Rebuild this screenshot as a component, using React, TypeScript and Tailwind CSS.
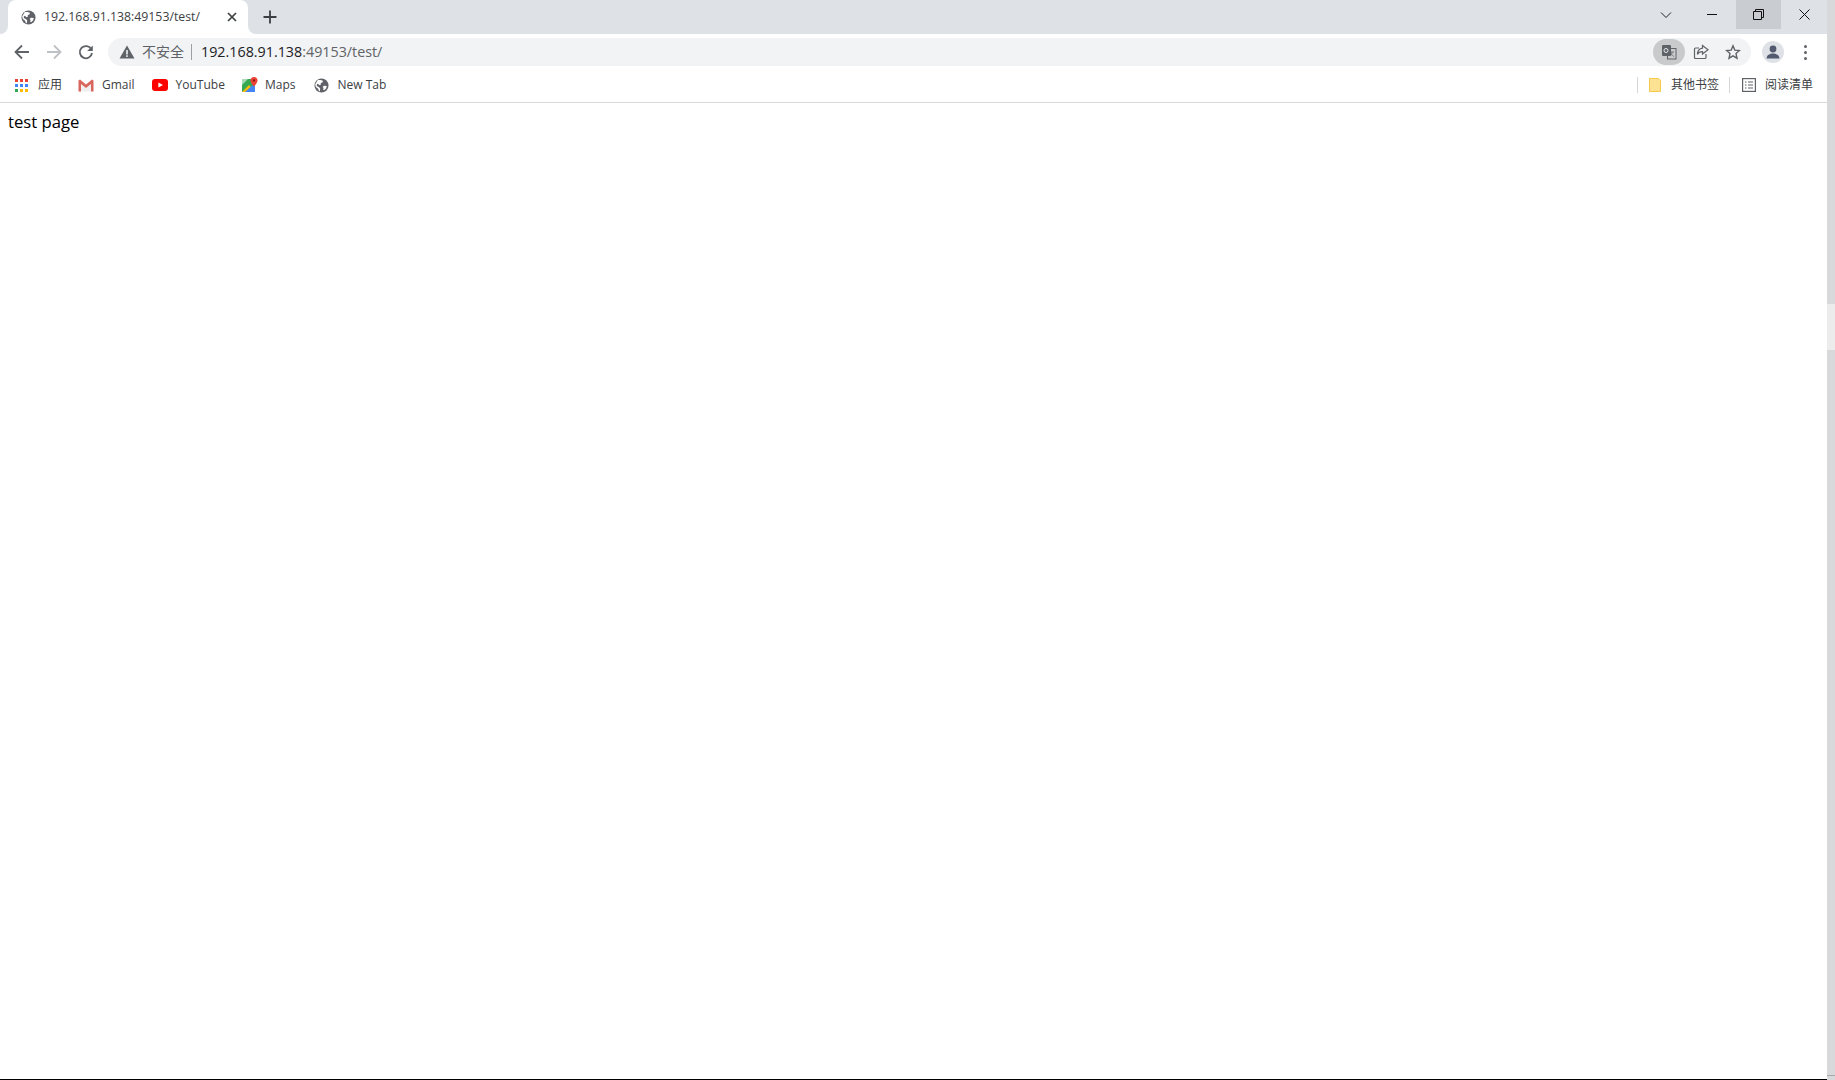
const uiFont = "font-['Open_Sans','Noto_Sans_CJK_SC',sans-serif]";

function Globe({ className }: { className: string }) {
    return (
        <svg className={className} viewBox="0 0 16 16">
            <circle cx="8" cy="8" r="7.5" fill="#5f6368" />
            <path d="M4 2.2 L7 2 L9.5 3 L9 4.8 L7.2 5.2 L7.4 6.8 L5.8 7.6 L4.2 6.2 L3 6.6 L3 8.4 L5.4 9.8 L6.6 11.2 L6.2 14.4 L5 13.4 L4.4 11.4 L2 9.6 L1.2 7 Z" fill="#fff" />
            <path d="M10.6 8.2 L13.6 8.6 L13 11 L10.8 13 L9.8 12.4 L10.2 10.6 L9.2 9.6 Z" fill="#fff" />
        </svg>
    );
}

function TabStrip() {
    return (
        <div className="flex h-[34px] items-end bg-[#dee1e6] pl-2">
            <div className="relative flex h-[34px] w-[240px] items-center rounded-t-lg bg-white pl-[13px]">
                <div className="absolute bottom-0 -left-2 h-2 w-2 bg-white">
                    <div className="h-2 w-2 rounded-br-lg bg-[#dee1e6]"></div>
                </div>
                <div className="absolute -right-2 bottom-0 h-2 w-2 bg-white">
                    <div className="h-2 w-2 rounded-bl-lg bg-[#dee1e6]"></div>
                </div>
                <Globe className="h-[15px] w-[15px]" />
                <span className="ml-2 w-[181px] text-[12.3px] whitespace-nowrap text-[#3c4043]">192.168.91.138:49153/test/</span>
                <svg className="h-[14px] w-[14px]" viewBox="0 0 14 14" fill="none" stroke="#3c4043" strokeWidth="1.7">
                    <path d="M3 3 L11 11 M11 3 L3 11" />
                </svg>
            </div>
            <svg className="mb-[9px] ml-[14px] h-4 w-4" viewBox="0 0 16 16" fill="none" stroke="#3c4043" strokeWidth="1.8">
                <path d="M8 1.5 V14.5 M1.5 8 H14.5" />
            </svg>
            <div className="flex-1"></div>
            <div className="flex h-[29px] items-center self-start">
                <div className="flex h-full w-[46px] items-center justify-center">
                    <svg className="h-3 w-3" viewBox="0 0 12 12" fill="none" stroke="#202124" strokeWidth="1">
                        <path d="M1 3.5 L6 8.5 L11 3.5" />
                    </svg>
                </div>
                <div className="w-[2px]"></div>
                <div className="flex h-full w-[45px] items-center justify-center pr-1">
                    <div className="h-px w-[10px] bg-[#111]"></div>
                </div>
                <div className="flex h-full w-[45px] items-center justify-center bg-[#c9ccd0]">
                    <svg className="h-[11px] w-[11px]" viewBox="0 0 11 11" fill="none" stroke="#111" strokeWidth="1">
                        <path d="M0.5 2.5 H8.5 V10.5 H0.5 Z M2.5 2.5 V0.5 H10.5 V8.5 H8.5" />
                    </svg>
                </div>
                <div className="flex h-full w-[46px] items-center justify-center">
                    <svg className="h-[11px] w-[11px]" viewBox="0 0 11 11" fill="none" stroke="#111" strokeWidth="1">
                        <path d="M0.5 0.5 L10.5 10.5 M10.5 0.5 L0.5 10.5" />
                    </svg>
                </div>
            </div>
        </div>
    );
}

function Toolbar() {
    return (
        <div className="flex h-[34px] items-center bg-white pt-[2px] pl-[14px]">
            <svg className="h-4 w-4" viewBox="0 0 16 16" fill="none" stroke="#5f6368" strokeWidth="1.8">
                <path d="M15 8 H2 M8 1.5 L1.5 8 L8 14.5" />
            </svg>
            <svg className="ml-4 h-4 w-4" viewBox="0 0 16 16" fill="none" stroke="#bdc1c6" strokeWidth="1.8">
                <path d="M1 8 H14 M8 1.5 L14.5 8 L8 14.5" />
            </svg>
            <svg className="ml-4 h-4 w-4" viewBox="0 0 16 16" fill="none">
                <path d="M13.3 5.2 A6.1 6.1 0 1 0 14 9" stroke="#5f6368" strokeWidth="1.8" />
                <path d="M14.8 1.4 V7 H9.2 Z" fill="#5f6368" />
            </svg>
            <div className="ml-[14px] flex h-7 w-[1643px] items-center rounded-full bg-[#f1f3f4] pl-[11px]">
                <svg className="h-4 w-4" viewBox="0 0 16 16">
                    <path d="M8 1.5 L15.5 14.5 H0.5 Z" fill="#5f6368" />
                    <rect x="7.2" y="6" width="1.6" height="4.5" fill="#f1f3f4" />
                    <rect x="7.2" y="11.3" width="1.6" height="1.6" fill="#f1f3f4" />
                </svg>
                <span className="ml-[7px] text-sm text-[#5f6368]">不安全</span>
                <div className="ml-[7px] h-[16px] w-px bg-[#9aa0a6]"></div>
                <span className="ml-[9px] text-[14.3px] whitespace-nowrap text-[#202124]">
                    192.168.91.138<span className="text-[#5f6368]">:49153/test/</span>
                </span>
                <div className="flex-1"></div>
                <div className="flex h-[26px] w-[32px] items-center justify-center rounded-full bg-[#c8cacc]">
                    <svg className="h-4 w-4" viewBox="0 0 16 16">
                        <rect x="1" y="1" width="9" height="11" rx="1" fill="#5f6368" />
                        <rect x="6.5" y="4.5" width="8.5" height="10.5" fill="none" stroke="#5f6368" strokeWidth="1" />
                        <circle cx="5" cy="6.5" r="2" fill="none" stroke="#e8eaed" strokeWidth="1" />
                        <path d="M9 8 H13 M11 8 C11 10 10 11.5 9 12 M10 9.5 C11 11 12 12 13 12.5" fill="none" stroke="#5f6368" strokeWidth="0.8" />
                    </svg>
                </div>
                <svg className="ml-2 h-4 w-4" viewBox="0 0 16 16" fill="none" stroke="#5f6368" strokeWidth="1.2">
                    <path d="M13 10 V13.5 Q13 14.5 12 14.5 H2.5 Q1.5 14.5 1.5 13.5 V5 Q1.5 4 2.5 4 H6" />
                    <path d="M9.5 1.5 L15 5.8 L9.5 10 V7.6 C7.5 7.6 5.5 8.4 4.4 10.4 C4.6 7 6.6 4.6 9.5 4.2 Z" />
                </svg>
                <svg className="ml-4 h-4 w-4" viewBox="0 0 16 16" fill="none" stroke="#5f6368" strokeWidth="1.4">
                    <path d="M8 1.8 L9.8 6.1 L14.5 6.5 L11 9.6 L12 14.2 L8 11.8 L4 14.2 L5 9.6 L1.5 6.5 L6.2 6.1 Z" />
                </svg>
                <div className="w-[10px]"></div>
            </div>
            <div className="ml-[11px] flex h-[22px] w-[22px] items-center justify-center rounded-full bg-[#dee1e6]">
                <svg className="h-4 w-4" viewBox="0 0 16 16" fill="#525a70">
                    <circle cx="8" cy="5" r="3.4" />
                    <path d="M1.6 14.5 C1.6 11 5 9.6 8 9.6 C11 9.6 14.4 11 14.4 14.5 Z" />
                </svg>
            </div>
            <div className="ml-[20px] flex flex-col gap-[3px]">
                <div className="h-[3px] w-[3px] rounded-full bg-[#5f6368]"></div>
                <div className="h-[3px] w-[3px] rounded-full bg-[#5f6368]"></div>
                <div className="h-[3px] w-[3px] rounded-full bg-[#5f6368]"></div>
            </div>
        </div>
    );
}

function AppsIcon() {
    const colors = ['#ea4335', '#ea4335', '#ea4335', '#4285f4', '#4285f4', '#4285f4', '#34a853', '#fbbc04', '#fbbc04'];
    return (
        <div className="grid h-[13px] w-[13px] grid-cols-3 gap-[2px]">
            {colors.map((c, i) => (
                <div key={i} className="h-[3px] w-[3px]" style={{ backgroundColor: c }}></div>
            ))}
        </div>
    );
}

function BookmarkBar() {
    return (
        <div className="flex h-[35px] items-center border-b border-[#d8d9da] bg-white pl-[15px] text-xs text-[#3c4043]">
            <AppsIcon />
            <span className="ml-[10px]">应用</span>
            <svg className="ml-4 h-[13px] w-4" viewBox="0 0 16 13">
                <path d="M3 5 L8 9 L13 5 V12.5 H3 Z" fill="#f0f0f0" />
                <path d="M0.5 1.5 V12.5 H3 V5 L8 9 L13 5 V12.5 H15.5 V1.5 L14 0.5 L8 5.4 L2 0.5 Z" fill="#d9665c" />
            </svg>
            <span className="ml-2">Gmail</span>
            <svg className="ml-[17px] h-3 w-4" viewBox="0 0 16 12">
                <rect width="16" height="12" rx="3" fill="#f00" />
                <path d="M6.4 3.4 L11 6 L6.4 8.6 Z" fill="#fff" />
            </svg>
            <span className="ml-2">YouTube</span>
            <svg className="ml-[17px] h-4 w-4" viewBox="0 0 16 16">
                <rect y="2" width="13" height="13" fill="#34a853" />
                <path d="M0 15 L7 8 L13 15 Z" fill="#fbbc04" />
                <path d="M3 15 L13 6 V15 Z" fill="#4285f4" />
                <path d="M0 2 H6 L0 8 Z" fill="#a8dab5" />
                <path d="M12 0 C9.8 0 8.5 1.6 8.5 3.4 C8.5 5.6 12 9.6 12 9.6 C12 9.6 15.5 5.6 15.5 3.4 C15.5 1.6 14.2 0 12 0 Z" fill="#ea4335" />
                <circle cx="12" cy="3.4" r="1.2" fill="#8c1a11" />
            </svg>
            <span className="ml-[7px]">Maps</span>
            <Globe className="ml-[19px] h-[15px] w-[15px]" />
            <span className="ml-2">New Tab</span>
            <div className="flex-1"></div>
            <div className="h-4 w-px bg-[#d5d6d8]"></div>
            <svg className="ml-[11px] h-[14px] w-3" viewBox="0 0 12 14">
                <path d="M0.5 0.5 H9.5 L11.5 2.5 V13.5 H0.5 Z" fill="#fde293" stroke="#f4c94c" />
            </svg>
            <span className="ml-[10px]">其他书签</span>
            <div className="ml-[10px] h-4 w-px bg-[#d5d6d8]"></div>
            <svg className="ml-3 h-[14px] w-[14px]" viewBox="0 0 14 14" fill="none" stroke="#5f6368" strokeWidth="1.2">
                <rect x="0.6" y="0.6" width="12.8" height="12.8" />
                <path d="M3 4 H4.5 M6 4 H11 M3 7 H4.5 M6 7 H11 M3 10 H4.5 M6 10 H11" />
            </svg>
            <span className="ml-[9px]">阅读清单</span>
            <div className="w-[14px]"></div>
        </div>
    );
}

function Scrollbar() {
    return (
        <div className="flex w-2 shrink-0 flex-col bg-[#d8d9da]">
            <div className="h-[304px]"></div>
            <div className="h-[46px] bg-[#ececec]"></div>
            <div className="flex-1"></div>
            <div className="mb-[4px] h-px bg-[#a9a9a9]"></div>
        </div>
    );
}

export default function App() {
    return (
        <div className={`flex h-[1080px] w-[1835px] overflow-hidden bg-white ${uiFont}`}>
            <div className="flex w-[1827px] flex-col">
                <TabStrip />
                <Toolbar />
                <BookmarkBar />
                <div className="flex-1 pt-[6px] pl-2 text-[16.7px] text-black">test page</div>
                <div className="h-px bg-black"></div>
            </div>
            <Scrollbar />
        </div>
    );
}
